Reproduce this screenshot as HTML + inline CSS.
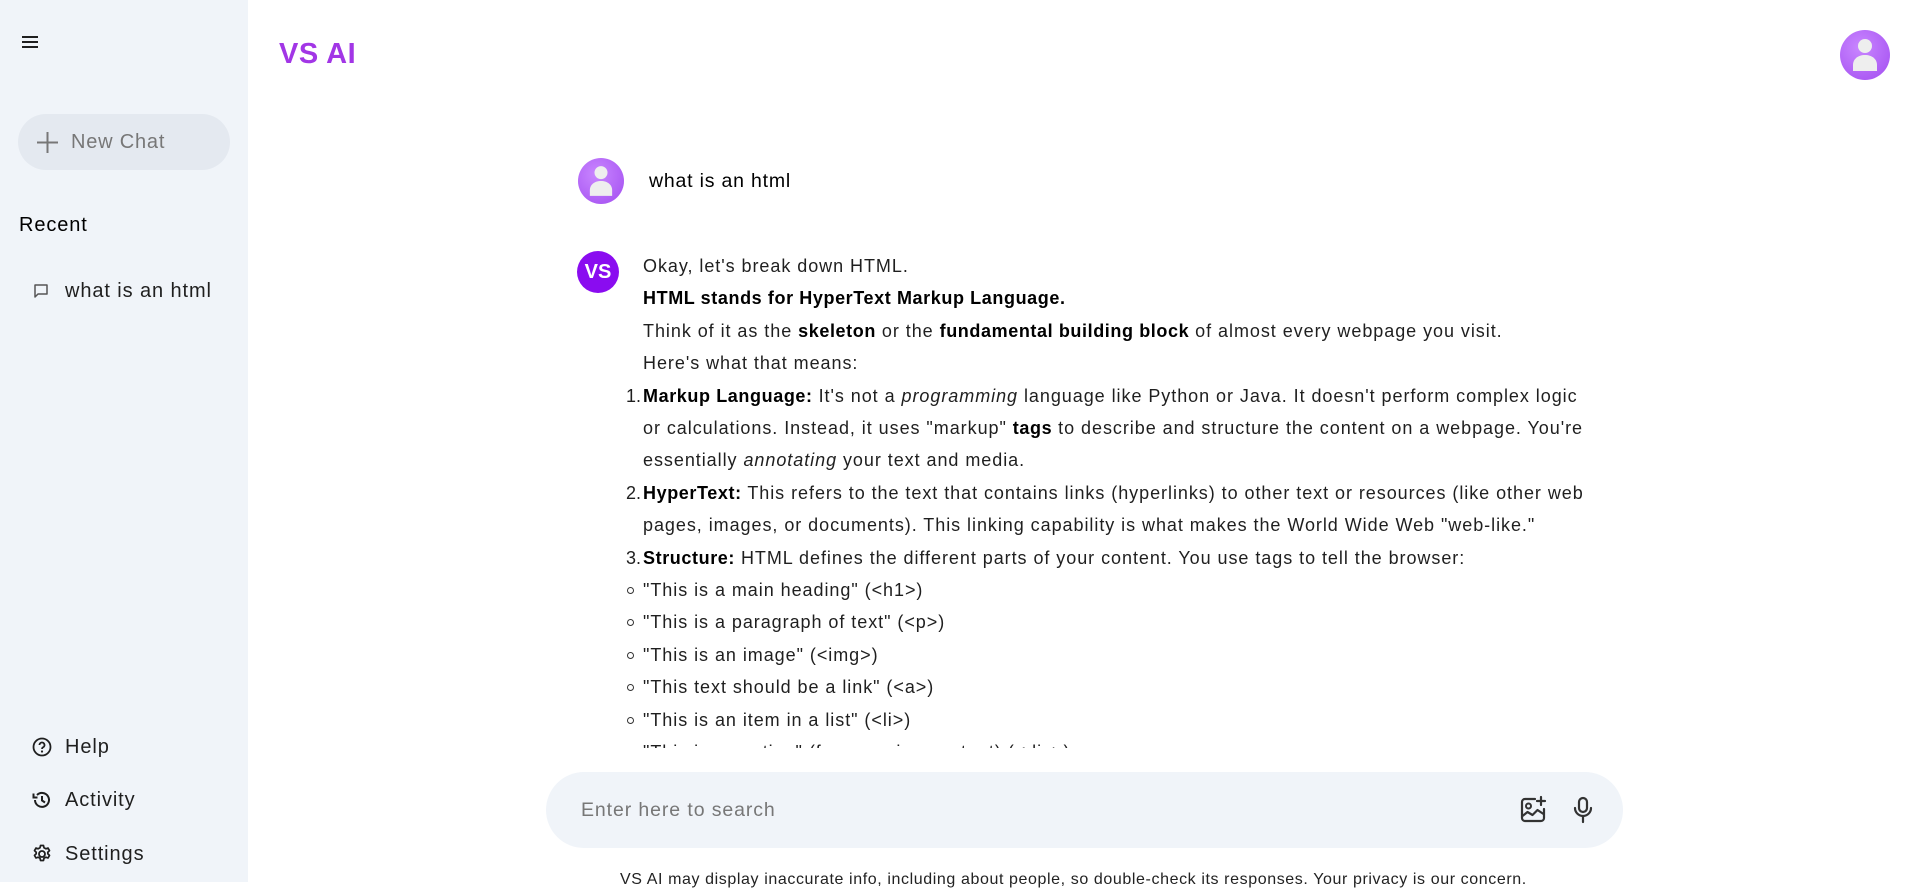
<!DOCTYPE html>
<html><head><meta charset="utf-8"><style>
*{margin:0;padding:0;box-sizing:border-box}
body{width:1919px;height:882px;overflow:hidden;background:#fff;font-family:"Liberation Sans",sans-serif;color:#1f1f1f;position:relative}
.side{position:absolute;left:0;top:0;width:248px;height:882px;background:#f0f4f9}
.abs{position:absolute}
.nc{left:18px;top:114px;width:212px;height:56px;border-radius:28px;background:#e4e9f0;color:#777;font-size:20px;line-height:56px;padding-left:53px;letter-spacing:0.8px}
.item{font-size:20px;color:#1f1f1f;letter-spacing:0.9px}
.avatar{border-radius:50%;background:radial-gradient(circle at 40% 35%,#c986ff,#a24df0)}
.msg{left:615px;top:250px;width:1000px;height:498px;overflow:hidden;font-size:18px;line-height:32.4px;color:#1f1f1f;letter-spacing:0.95px;padding-left:28px}
.msg b{color:#000;letter-spacing:0.6px}
.n{position:absolute;left:-18px;width:16px;text-align:right;letter-spacing:0}
.row{position:relative}
.bul{position:absolute;left:-16px;top:13px;width:7px;height:7px;border:1.3px solid #333;border-radius:50%}
.search{left:546px;top:772px;width:1077px;height:76px;border-radius:38px;background:#f0f4f9}
</style></head><body>
<div class="side">
  <svg class="abs" style="left:21px;top:34px" width="18" height="16" viewBox="0 0 18 16"><path d="M1 3h16M1 8h16M1 13h16" stroke="#1f1f1f" stroke-width="2"/></svg>
  <div class="abs nc">New Chat</div>
  <svg class="abs" style="left:36px;top:131px" width="23" height="23" viewBox="0 0 23 23"><path d="M11.5 1v21M1 11.5h21" stroke="#777" stroke-width="2"/></svg>
  <div class="abs item" style="left:19px;top:214px;color:#000">Recent</div>
  <svg class="abs" style="left:33px;top:283px" width="16" height="16" viewBox="0 0 16 16"><path d="M2 2h12v9H5l-3 3z" fill="none" stroke="#555" stroke-width="1.5" stroke-linejoin="round"/></svg>
  <div class="abs item" style="left:65px;top:280px">what is an html</div>
  <svg class="abs" style="left:32px;top:737px" width="20" height="20" viewBox="0 0 20 20"><circle cx="10" cy="10" r="8.5" fill="none" stroke="#1f1f1f" stroke-width="1.8"/><path d="M7.5 8a2.5 2.5 0 1 1 3.5 2.3c-.7.4-1 .8-1 1.7" fill="none" stroke="#1f1f1f" stroke-width="1.8"/><circle cx="10" cy="14.5" r="1.1" fill="#1f1f1f"/></svg>
  <div class="abs item" style="left:65px;top:736px">Help</div>
  <svg class="abs" style="left:32px;top:790px" width="20" height="20" viewBox="0 0 20 20"><path d="M3 10a7 7 0 1 0 2-5" fill="none" stroke="#1f1f1f" stroke-width="2"/><path d="M1.5 3.5v4h4" fill="none" stroke="#1f1f1f" stroke-width="2"/><path d="M10 6v4.5l3 2" fill="none" stroke="#1f1f1f" stroke-width="2"/></svg>
  <div class="abs item" style="left:65px;top:789px">Activity</div>
  <svg class="abs" style="left:32px;top:844px" width="20" height="20" viewBox="0 0 20 20"><circle cx="10" cy="10" r="3" fill="none" stroke="#1f1f1f" stroke-width="1.8"/><path d="M8.5 1.5h3l.5 2.3 1.8 1 2.2-.8 1.5 2.6-1.7 1.6v1.6l1.7 1.6-1.5 2.6-2.2-.8-1.8 1-.5 2.3h-3l-.5-2.3-1.8-1-2.2.8-1.5-2.6 1.7-1.6V8.2L2.5 6.6 4 4l2.2.8 1.8-1z" fill="none" stroke="#1f1f1f" stroke-width="1.7" stroke-linejoin="round"/></svg>
  <div class="abs item" style="left:65px;top:843px">Settings</div>
</div>

<div class="abs" style="left:279px;top:38px;font-size:29px;font-weight:bold;color:#a236e6;letter-spacing:0.5px">VS AI</div>
<div class="abs avatar" style="left:1840px;top:30px;width:50px;height:50px"></div>
<svg class="abs" style="left:1851px;top:37px" width="28" height="36" viewBox="0 0 28 36"><circle cx="14" cy="9" r="7" fill="#eee"/><path d="M2 34v-6c0-6 5-10 12-10s12 4 12 10v6z" fill="#eee"/></svg>

<div class="abs avatar" style="left:578px;top:158px;width:46px;height:46px"></div>
<svg class="abs" style="left:588px;top:164px" width="26" height="34" viewBox="0 0 28 36"><circle cx="14" cy="9" r="7" fill="#eee"/><path d="M2 34v-6c0-6 5-10 12-10s12 4 12 10v6z" fill="#eee"/></svg>
<div class="abs" style="left:649px;top:170px;font-size:19.5px;color:#000;letter-spacing:0.8px">what is an html</div>

<div class="abs" style="left:577px;top:251px;width:42px;height:42px;border-radius:50%;background:#8a0cf0;color:#fff;font-weight:bold;font-size:20px;line-height:42px;text-align:center">VS</div>

<div class="abs msg">
<div>Okay, let's break down HTML.</div>
<div><b>HTML stands for HyperText Markup Language.</b></div>
<div>Think of it as the <b>skeleton</b> or the <b>fundamental building block</b> of almost every webpage you visit.</div>
<div>Here's what that means:</div>
<div class="row"><span class="n">1.</span><b>Markup Language:</b> It's not a <i>programming</i> language like Python or Java. It doesn't perform complex logic<br>or calculations. Instead, it uses "markup" <b>tags</b> to describe and structure the content on a webpage. You're<br>essentially <i>annotating</i> your text and media.</div>
<div class="row"><span class="n">2.</span><b>HyperText:</b> This refers to the text that contains links (hyperlinks) to other text or resources (like other web<br>pages, images, or documents). This linking capability is what makes the World Wide Web "web-like."</div>
<div class="row"><span class="n">3.</span><b>Structure:</b> HTML defines the different parts of your content. You use tags to tell the browser:</div>
<div class="row"><span class="bul"></span>"This is a main heading" (&lt;h1&gt;)</div>
<div class="row"><span class="bul"></span>"This is a paragraph of text" (&lt;p&gt;)</div>
<div class="row"><span class="bul"></span>"This is an image" (&lt;img&gt;)</div>
<div class="row"><span class="bul"></span>"This text should be a link" (&lt;a&gt;)</div>
<div class="row"><span class="bul"></span>"This is an item in a list" (&lt;li&gt;)</div>
<div class="row"><span class="bul"></span>"This is a section" (for grouping content) (&lt;div&gt;)</div>
</div>

<div class="abs search"></div>
<div class="abs" style="left:581px;top:799px;font-size:19.5px;color:#777;letter-spacing:0.9px">Enter here to search</div>
<svg class="abs" style="left:1518px;top:795px" width="30" height="30" viewBox="0 0 30 30"><path d="M17 4H7a3 3 0 0 0-3 3v16a3 3 0 0 0 3 3h16a3 3 0 0 0 3-3v-9" fill="none" stroke="#333" stroke-width="2.2" stroke-linecap="round"/><circle cx="10.5" cy="11" r="2.5" fill="none" stroke="#333" stroke-width="2"/><path d="M4.5 21l5-4 5 3 5-5 6 4" fill="none" stroke="#333" stroke-width="2.2" stroke-linejoin="round"/><path d="M23 2v8M19 6h8" stroke="#333" stroke-width="2.2" stroke-linecap="round"/></svg>
<svg class="abs" style="left:1572px;top:796px" width="22" height="28" viewBox="0 0 22 28"><rect x="7" y="2" width="8" height="14" rx="4" fill="none" stroke="#333" stroke-width="2.2"/><path d="M3 12a8 8 0 0 0 16 0M11 20v6" fill="none" stroke="#333" stroke-width="2.2" stroke-linecap="round"/></svg>

<div class="abs" style="left:620px;top:871px;font-size:16px;color:#222;white-space:nowrap;letter-spacing:0.6px">VS AI may display inaccurate info, including about people, so double-check its responses. Your privacy is our concern.</div>
</body></html>
